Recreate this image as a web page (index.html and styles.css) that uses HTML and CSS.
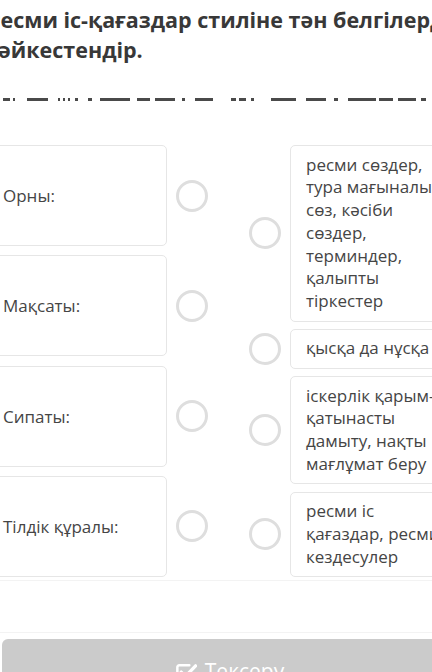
FILE: index.html
```html
<!DOCTYPE html>
<html lang="kk">
<head>
<meta charset="utf-8">
<title>Сәйкестендір</title>
<link rel="stylesheet" href="styles.css">
</head>
<body>
<div class="page">
  <h1 class="title">Ресми іс-қағаздар стиліне тән белгілерді сәйкестендір.</h1>
  <div class="cut-line"></div>
  <div class="board">
    <div class="col col-left">
      <div class="item"><div class="card card-left">Орны:</div><span class="radio"></span></div>
      <div class="item"><div class="card card-left">Мақсаты:</div><span class="radio"></span></div>
      <div class="item"><div class="card card-left">Сипаты:</div><span class="radio"></span></div>
      <div class="item"><div class="card card-left">Тілдік құралы:</div><span class="radio"></span></div>
    </div>
    <div class="col col-right">
      <div class="item"><span class="radio"></span><div class="card card-right">ресми сөздер, тура мағыналы сөз, кәсіби сөздер, терминдер, қалыпты тіркестер</div></div>
      <div class="item"><span class="radio"></span><div class="card card-right">қысқа да нұсқа</div></div>
      <div class="item"><span class="radio"></span><div class="card card-right">іскерлік қарым-қатынасты дамыту, нақты мағлұмат беру</div></div>
      <div class="item"><span class="radio"></span><div class="card card-right">ресми іс қағаздар, ресми кездесулер</div></div>
    </div>
  </div>
  <div class="rule rule-a"></div>
  <div class="rule rule-b"></div>
  <button class="check-btn" type="button">
    <svg class="check-icon" viewBox="0 0 24 24" width="23" height="23" aria-hidden="true">
      <path d="M16 3.5H5.5a2 2 0 0 0-2 2v13a2 2 0 0 0 2 2h13a2 2 0 0 0 2-2v-6.5" fill="none" stroke="#fff" stroke-width="2.6" stroke-linecap="round"/>
      <path d="M7.5 10.5l4.5 4.5L22.5 4" fill="none" stroke="#fff" stroke-width="3.4" stroke-linecap="round" stroke-linejoin="round"/>
    </svg>
    <span>Тексеру</span>
  </button>
</div>
</body>
</html>
```

FILE: styles.css
```css
html, body {
  margin: 0;
  padding: 0;
  width: 432px;
  height: 672px;
  overflow: hidden;
  background: #ffffff;
}

.page {
  margin-left: -13px;
  width: 520px;
  font-family: "Open Sans", "Noto Sans", "DejaVu Sans", sans-serif;
  color: #444444;
}

.title {
  margin: 5px 0 0 0;
  width: 500px;
  font-size: 21.5px;
  line-height: 30px;
  font-weight: 700;
  color: #383838;
}

.cut-line {
  margin: 33px 0 0 13px;
  width: 432px;
  height: 3px;
  background: linear-gradient(to right,
    transparent 3px, #4a4a4a 3px, #4a4a4a 10px, transparent 10px,
    transparent 13px, #4a4a4a 13px, #4a4a4a 15px, transparent 15px,
    transparent 27px, #4a4a4a 27px, #4a4a4a 48px, transparent 48px,
    transparent 58px, #4a4a4a 58px, #4a4a4a 60px, transparent 60px,
    transparent 63px, #4a4a4a 63px, #4a4a4a 65px, transparent 65px,
    transparent 68px, #4a4a4a 68px, #4a4a4a 70px, transparent 70px,
    transparent 75px, #4a4a4a 75px, #4a4a4a 78px, transparent 78px,
    transparent 88px, #4a4a4a 88px, #4a4a4a 92px, transparent 92px,
    transparent 100px, #4a4a4a 100px, #4a4a4a 130px, transparent 130px,
    transparent 137px, #4a4a4a 137px, #4a4a4a 150px, transparent 150px,
    transparent 155px, #4a4a4a 155px, #4a4a4a 175px, transparent 175px,
    transparent 182px, #4a4a4a 182px, #4a4a4a 185px, transparent 185px,
    transparent 195px, #4a4a4a 195px, #4a4a4a 213px, transparent 213px,
    transparent 231px, #4a4a4a 231px, #4a4a4a 236px, transparent 236px,
    transparent 239px, #4a4a4a 239px, #4a4a4a 246px, transparent 246px,
    transparent 251px, #4a4a4a 251px, #4a4a4a 254px, transparent 254px,
    transparent 271px, #4a4a4a 271px, #4a4a4a 296px, transparent 296px,
    transparent 306px, #4a4a4a 306px, #4a4a4a 326px, transparent 326px,
    transparent 334px, #4a4a4a 334px, #4a4a4a 338px, transparent 338px,
    transparent 348px, #4a4a4a 348px, #4a4a4a 376px, transparent 376px,
    transparent 379px, #4a4a4a 379px, #4a4a4a 393px, transparent 393px,
    transparent 398px, #4a4a4a 398px, #4a4a4a 416px, transparent 416px,
    transparent 421px, #4a4a4a 421px, #4a4a4a 426px, transparent 426px);
}

.board {
  margin-top: 44px;
  display: flex;
  gap: 41px;
  height: 432px;
}

.col {
  display: flex;
  flex-direction: column;
  justify-content: space-between;
}

.item {
  display: flex;
  align-items: center;
  gap: 9px;
}

.card {
  box-sizing: border-box;
  border: 1px solid #e6e6e6;
  border-radius: 5px;
  background: #ffffff;
  font-size: 17px;
  color: #454545;
}

.card-left {
  width: 180px;
  height: 101px;
  padding: 0 15px;
  display: flex;
  align-items: center;
}

.card-right {
  width: 174px;
  padding: 7.5px 15px;
  line-height: 22.8px;
}

.radio {
  flex-shrink: 0;
  box-sizing: border-box;
  width: 32px;
  height: 32px;
  border: 3px solid #dedede;
  border-radius: 50%;
}

.rule {
  width: 432px;
  margin-left: 13px;
  height: 1px;
  background: #f3f3f3;
}

.rule-a {
  margin-top: 3px;
}

.rule-b {
  margin-top: 51px;
}

.check-btn {
  margin: 6px 0 0 15px;
  width: 454px;
  height: 60px;
  padding: 18px 0 0 0;
  border: none;
  border-radius: 6px;
  background: #cbcbcb;
  color: #ffffff;
  font-family: "Open Sans", "Noto Sans", sans-serif;
  font-size: 21px;
  line-height: 28px;
  display: flex;
  justify-content: center;
  align-items: flex-start;
  gap: 8px;
}

.check-icon {
  margin-top: 5px;
  flex-shrink: 0;
}
```
